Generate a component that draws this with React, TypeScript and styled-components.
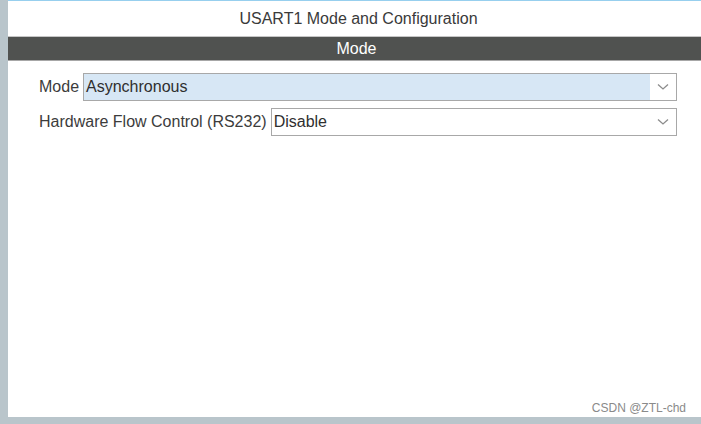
import React from "react";
import styled, { createGlobalStyle } from "styled-components";

const Global = createGlobalStyle`
  html, body { margin: 0; padding: 0; }
  body { width: 701px; height: 424px; overflow: hidden; background: #b9c5cb; }
  #root { width: 701px; height: 424px; }
`;

const Frame = styled.div`
  width: 701px;
  height: 424px;
  box-sizing: border-box;
  padding: 0 0 7px 8px;
  background: #b9c5cb;
  display: flex;
`;

const Panel = styled.div`
  flex: 1;
  background: #ffffff;
  border-top: 1px solid #97cfee;
  display: flex;
  flex-direction: column;
  position: relative;
  font-family: "Liberation Sans", Arial, sans-serif;
`;

const Title = styled.div`
  height: 35px;
  display: flex;
  align-items: center;
  justify-content: center;
  font-size: 16px;
  color: #3a3a3a;
  padding-left: 8px;
`;

const SectionBar = styled.div`
  height: 23px;
  border-top: 1px solid #c6c6c6;
  border-bottom: 1px solid #a7a7a7;
  background: #505250;
  color: #ffffff;
  font-size: 16px;
  display: flex;
  align-items: center;
  justify-content: center;
  padding-left: 4px;
`;

const Form = styled.div`
  display: flex;
  flex-direction: column;
  gap: 7px;
  padding: 12px 24px 0 31px;
`;

const Row = styled.div`
  display: flex;
  align-items: center;
  gap: 4px;
`;

const Label = styled.span`
  font-size: 16px;
  color: #3c3c3c;
  white-space: nowrap;
`;

const Select = styled.div`
  flex: 1;
  height: 28px;
  box-sizing: border-box;
  border: 1px solid #a8a8a8;
  display: flex;
  align-items: stretch;
  background: #ffffff;
`;

const Value = styled.div<{ $active?: boolean }>`
  flex: 1;
  background: ${(p) => (p.$active ? "#d7e7f5" : "#ffffff")};
  display: flex;
  align-items: center;
  padding-left: 2px;
  font-size: 16px;
  color: #2f2f2f;
`;

const Arrow = styled.div`
  width: 26px;
  display: flex;
  align-items: center;
  justify-content: center;
  background: #ffffff;
`;

const Watermark = styled.div`
  position: absolute;
  right: 15px;
  bottom: 2px;
  font-size: 12px;
  color: #8a8a8a;
  font-family: "Liberation Sans", Arial, sans-serif;
`;

const Chevron = () => (
  <svg width="12" height="8" viewBox="0 0 12 8">
    <polyline points="1,1.5 6,6 11,1.5" fill="none" stroke="#8c8c8c" strokeWidth="1.3" />
  </svg>
);

export default function App() {
  return (
    <>
      <Global />
      <Frame>
        <Panel>
          <Title>USART1 Mode and Configuration</Title>
          <SectionBar>Mode</SectionBar>
          <Form>
            <Row>
              <Label>Mode</Label>
              <Select>
                <Value $active>Asynchronous</Value>
                <Arrow>
                  <Chevron />
                </Arrow>
              </Select>
            </Row>
            <Row>
              <Label>Hardware Flow Control (RS232)</Label>
              <Select>
                <Value>Disable</Value>
                <Arrow>
                  <Chevron />
                </Arrow>
              </Select>
            </Row>
          </Form>
          <Watermark>CSDN @ZTL-chd</Watermark>
        </Panel>
      </Frame>
    </>
  );
}
